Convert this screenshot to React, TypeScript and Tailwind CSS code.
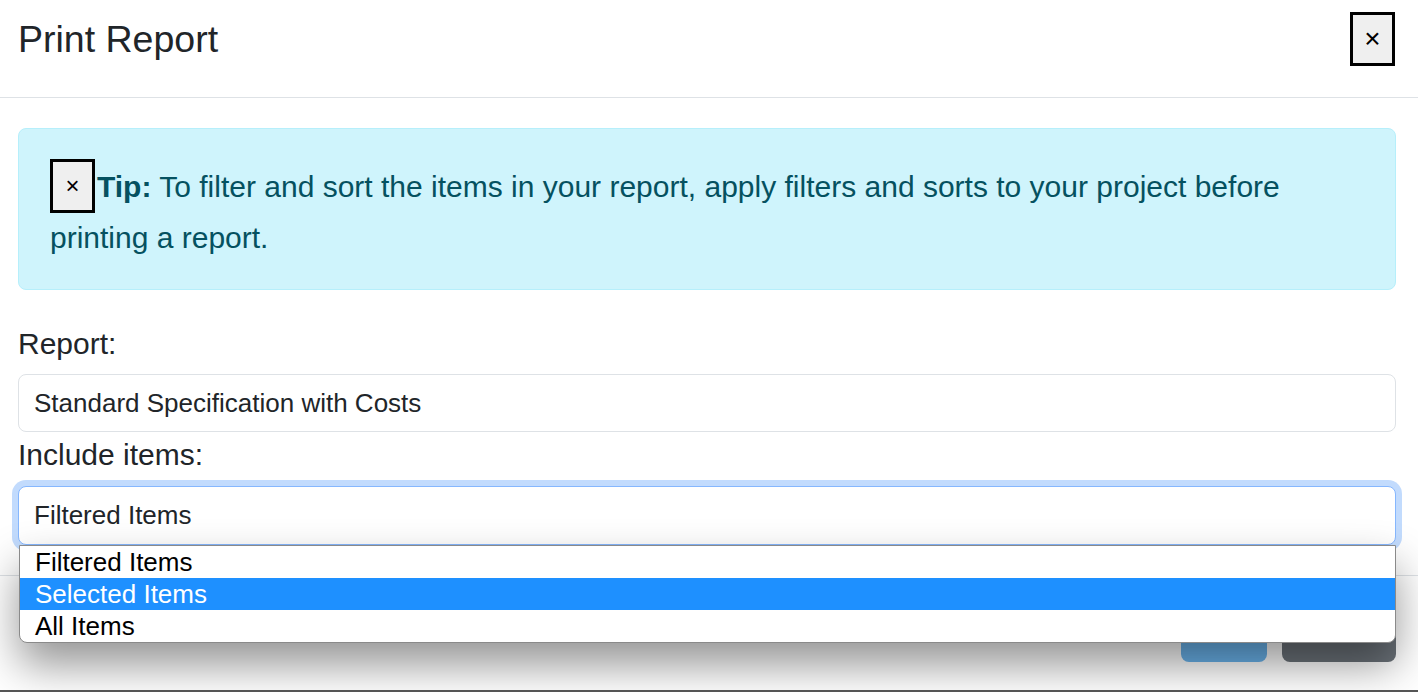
import React from "react";

export default function App() {
  return (
    <div
      className="relative flex h-[692px] w-full flex-col overflow-hidden border-b-2 border-[#555555] bg-white text-[#212529]"
      style={{ fontFamily: '"Liberation Sans", Arial, sans-serif' }}
    >
      {/* Header */}
      <div className="flex h-[98px] shrink-0 items-start justify-between border-b border-[#dee2e6] pl-[18px] pr-[23px] pt-[12px]">
        <h1 className="text-[37.5px] leading-[54px] font-normal">Print Report</h1>
        <button className="flex h-[54px] w-[45px] items-center justify-center border-[3px] border-black bg-[#efefef] text-[28px] leading-none text-black">
          ×
        </button>
      </div>

      {/* Body */}
      <div className="shrink-0 pl-[18px] pr-[22px] pt-[30px] pb-[30px]">
        <div className="rounded-[8px] border border-[#b6effb] bg-[#cff4fc] px-[31px] pt-[30px] pb-[26px] text-[30px] leading-[50px] text-[#055160]">
          <button className="mr-[2px] inline-flex h-[54px] w-[45px] items-center justify-center border-[3px] border-black bg-[#efefef] align-[3px] text-[24px] leading-none text-black">
            ×
          </button>
          <strong className="font-bold">Tip:</strong> To filter and sort the items in your report, apply filters and sorts to your project before printing a report.
        </div>

        <label className="mt-[31px] block text-[30px] leading-[46px]">Report:</label>
        <div className="mt-[7px] flex h-[58px] items-center rounded-[8px] border border-[#dee2e6] bg-white px-[15px] text-[26px]">
          Standard Specification with Costs
        </div>

        <label className="block text-[30px] leading-[46px]">Include items:</label>
        <div className="relative mt-[8px]">
          <div className="flex h-[59px] items-center rounded-[8px] border border-[#86b7fe] bg-white px-[15px] text-[26px] shadow-[0_0_0_6px_#c2dbfd]">
            Filtered Items
          </div>
          <div className="absolute top-[59px] left-px right-0 z-10 overflow-hidden rounded-b-[8px] border border-[#8a8a8a] bg-white text-[26px] leading-[32px] text-black shadow-[0_22px_44px_rgba(0,0,0,0.42)]">
            <div className="h-[32px] px-[15px]">Filtered Items</div>
            <div className="h-[32px] bg-[#1e90ff] px-[15px] text-white">Selected Items</div>
            <div className="h-[32px] px-[15px]">All Items</div>
          </div>
        </div>
      </div>

      {/* Footer */}
      <div className="flex flex-1 items-center justify-end gap-[15px] border-t border-[#dee2e6] pr-[22px]">
        <button className="h-[58px] w-[86px] rounded-[8px] bg-[#6bb5ee] text-[26px] text-white">Print</button>
        <button className="h-[58px] w-[114px] rounded-[8px] bg-[#6c737a] text-[26px] text-white">Cancel</button>
      </div>
    </div>
  );
}
